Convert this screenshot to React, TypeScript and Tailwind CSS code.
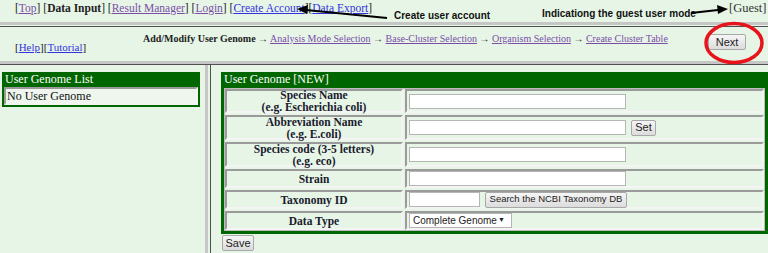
import React from "react";

const serif = { fontFamily: '"Liberation Serif", "Times New Roman", serif' };
const sans = { fontFamily: '"Liberation Sans", Arial, sans-serif' };

function Btn({ children, className = "", small = false }: { children: React.ReactNode; className?: string; small?: boolean }) {
  return (
    <span
      className={`inline-flex shrink-0 items-center justify-center whitespace-nowrap h-[16px] px-[2px] ${small ? "text-[9.5px]" : "text-[11px]"} text-[#222] border border-[#a8a8a8] rounded-[2px] bg-gradient-to-b from-[#f6f6f6] to-[#dcdcdc] ${className}`}
      style={sans}
    >
      {children}
    </span>
  );
}

function Input({ w }: { w: string }) {
  return <span className={`inline-block shrink-0 h-[15px] bg-white border border-[#b5b5b5] ${w}`} />;
}

function Row({ h, label, children }: { h: string; label: React.ReactNode; children: React.ReactNode }) {
  return (
    <div className={`flex gap-[2px] ${h}`}>
      <div className="w-[178px] shrink-0 flex items-center justify-center text-center border-[2px] border-t-[#9a9a9a] border-l-[#9a9a9a] border-b-[#f4f4f4] border-r-[#f4f4f4] text-[11.5px] leading-[12px] font-bold text-[#1a1a2e]" style={serif}>
        <div>{label}</div>
      </div>
      <div className="flex-1 flex items-center gap-[5px] pl-[2px] border-[2px] border-t-[#9a9a9a] border-l-[#9a9a9a] border-b-[#f4f4f4] border-r-[#f4f4f4]">
        {children}
      </div>
    </div>
  );
}

export default function App() {
  return (
    <div className="relative w-[768px] h-[253px] overflow-hidden bg-[#e6f5e6] text-black" style={serif}>
      {/* Top frame */}
      <div className="h-[22px] pl-[15px] text-[11.5px] leading-[17px] text-[#222] whitespace-nowrap">
        [<a className="underline text-[#7a4ea6]">Top</a>] [<b>Data Input</b>] [<a className="underline text-[#7a4ea6]">Result Manager</a>] [<a className="underline text-[#7a4ea6]">Login</a>] [<a className="underline text-[#3333dd]">Create Account</a>][<a className="underline text-[#3333dd]">Data Export</a>]
      </div>
      <div className="h-[5px] border-t-[3px] border-t-[#c6c6c6] border-b border-b-[#505050]" />

      {/* Second frame */}
      <div className="h-[34px] flex">
        <div className="w-[128px] shrink-0 pl-[15px] pt-[13px] text-[11px] leading-[14px] text-[#222] whitespace-nowrap">
          [<a className="underline text-[#3333dd]">Help</a>][<a className="underline text-[#3333dd]">Tutorial</a>]
        </div>
        <div className="flex-1 min-w-0 pt-[5px] pl-[15px] text-[10px] leading-[14px] text-[#222] whitespace-nowrap">
          <b>Add/Modify User Genome</b> → <a className="underline text-[#7a4ea6]">Analysis Mode Selection</a> → <a className="underline text-[#7a4ea6]">Base-Cluster Selection</a> → <a className="underline text-[#7a4ea6]">Organism Selection</a> → <a className="underline text-[#7a4ea6]">Create Cluster Table</a>
        </div>
        <div className="shrink-0 pt-[7px] pr-[22px] flex items-start justify-end">
          <Btn className="w-[38px]">Next</Btn>
        </div>
      </div>
      <div className="h-[4px] border-t-[3px] border-t-[#c6c6c6] border-b border-b-[#505050]" />

      {/* Bottom frames */}
      <div className="flex h-[188px]">
        <div className="w-[205px] shrink-0 pl-[2px] pr-[5px] pt-[7px]">
          <div className="bg-[#006600] p-[2px] pt-0">
            <div className="h-[15px] text-[12px] leading-[15px] text-white pl-[1px]">User Genome List</div>
            <div className="h-[18px] border-[2px] border-t-[#9a9a9a] border-l-[#9a9a9a] border-b-[#f4f4f4] border-r-[#f4f4f4] bg-[#eef6ee] text-[12px] leading-[14px] pl-[1px] text-[#111]">
              No User Genome
            </div>
          </div>
        </div>
        <div className="w-[6px] shrink-0 border-l-[3px] border-l-[#c6c6c6] border-r border-r-[#505050]" />
        <div className="flex-1 pl-[10px] pt-[7px]">
          <div className="bg-[#006600] px-[3px] pb-[3px]">
            <div className="h-[16px] text-[12px] leading-[15px] text-white">User Genome [NEW]</div>
            <div className="bg-[#e6f5e6] border border-[#bdbdbd] flex flex-col gap-[2px]">
              <Row h="h-[24px]" label={<>Species Name<br />(e.g. Escherichia coli)</>}>
                <Input w="w-[217px]" />
              </Row>
              <Row h="h-[25px]" label={<>Abbreviation Name<br />(e.g. E.coli)</>}>
                <Input w="w-[217px]" />
                <Btn className="w-[25px]">Set</Btn>
              </Row>
              <Row h="h-[25px]" label={<>Species code (3-5 letters)<br />(e.g. eco)</>}>
                <Input w="w-[217px]" />
              </Row>
              <Row h="h-[19px]" label="Strain">
                <Input w="w-[217px]" />
              </Row>
              <Row h="h-[19px]" label="Taxonomy ID">
                <Input w="w-[71px]" />
                <Btn small className="w-[142px]">Search the NCBI Taxonomy DB</Btn>
              </Row>
              <Row h="h-[19px]" label="Data Type">
                <span className="inline-flex items-center justify-between w-[103px] h-[15px] bg-white border border-[#b5b5b5] text-[10px] pl-[3px] pr-[6px] text-[#222]" style={sans}>
                  Complete Genome<span className="text-[7px]">▼</span>
                </span>
              </Row>
            </div>
          </div>
          <div className="flex pt-[1px] pl-[1px]">
            <Btn className="w-[32px]">Save</Btn>
          </div>
        </div>
      </div>

      {/* Annotations */}
      <div className="absolute left-[394px] top-[8px] text-[10px] font-bold text-[#111]" style={sans}>Create user account</div>
      <div className="absolute left-[542px] top-[6px] text-[10px] font-bold text-[#111]" style={sans}>Indicationg the guest user mode</div>
      <div className="absolute left-[729px] top-[0px] text-[12.5px] leading-[17px] text-[#333]">[Guest]</div>
      <svg className="absolute left-0 top-0" width="768" height="253" viewBox="0 0 768 253">
        <line x1="387" y1="18" x2="306" y2="10" stroke="#000" strokeWidth="2.2" />
        <polygon points="297,9 308,5 307,14" fill="#000" />
        <line x1="691" y1="13" x2="718" y2="10" stroke="#000" strokeWidth="2.2" />
        <polygon points="728,9 717,5 718,14" fill="#000" />
        <ellipse cx="734" cy="43" rx="28" ry="19.5" fill="none" stroke="#e8141c" strokeWidth="3.5" />
      </svg>
    </div>
  );
}
